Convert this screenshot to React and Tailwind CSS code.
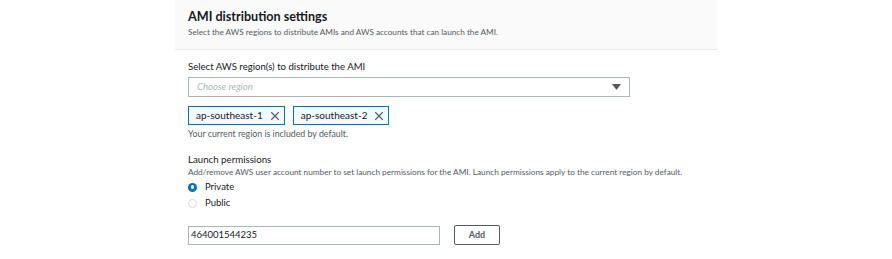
import React from 'react';

const font = { fontFamily: 'Lato, "Liberation Sans", sans-serif' };

const XIcon = () => (
  <svg width="10" height="10" viewBox="0 0 12 12" fill="none" stroke="#545b64" strokeWidth="1.4">
    <path d="M1.5 1.5l9 9M10.5 1.5l-9 9" />
  </svg>
);

const Token = ({ label }) => (
  <div className="flex items-center h-[19px] pl-[7px] pr-[4px] gap-[7px] border border-[#0073bb] bg-[#f1faff] text-[10px] text-[#16191f]">
    <span>{label}</span>
    <XIcon />
  </div>
);

const Radio = ({ checked, label }) => (
  <label className="flex items-center gap-[8px] h-[16px] text-[9.5px] text-[#16191f]">
    {checked ? (
      <span className="w-[9px] h-[9px] rounded-full bg-[#0073bb] flex items-center justify-center">
        <span className="w-[3.5px] h-[3.5px] rounded-full bg-white" />
      </span>
    ) : (
      <span className="w-[9px] h-[9px] rounded-full border border-[#d5dbdb] bg-white" />
    )}
    {label}
  </label>
);

export default function App() {
  return (
    <div className="w-[892px] h-[259px] bg-white" style={font}>
      <div className="mx-auto w-[542px]">
        {/* Header */}
        <div className="h-[50px] bg-[#fafafa] border-b border-[#eaeded] pl-[13px] pt-[8px]">
          <h2 className="text-[12.6px] leading-[18px] font-bold text-[#16191f]">AMI distribution settings</h2>
          <p className="text-[8.2px] leading-[13px] text-[#545b64]">
            Select the AWS regions to distribute AMIs and AWS accounts that can launch the AMI.
          </p>
        </div>

        <div className="pl-[13px] pt-[10px]">
          {/* Regions */}
          <div className="text-[9.6px] leading-[14px] text-[#16191f]">Select AWS region(s) to distribute the AMI</div>
          <div className="mt-[3px] w-[442px] h-[20px] border border-[#aab7b8] flex items-center justify-between pl-[8px] pr-[8px]">
            <span className="text-[9.5px] italic text-[#aab7b8]">Choose region</span>
            <svg width="9" height="6" viewBox="0 0 9 6">
              <path d="M0 0h9L4.5 6z" fill="#545b64" />
            </svg>
          </div>
          <div className="mt-[9px] flex gap-[8px]">
            <Token label="ap-southeast-1" />
            <Token label="ap-southeast-2" />
          </div>
          <div className="mt-[3px] text-[8.8px] leading-[12px] text-[#545b64]">Your current region is included by default.</div>

          {/* Launch permissions */}
          <div className="mt-[12px] text-[9.7px] leading-[14px] text-[#16191f]">Launch permissions</div>
          <div className="text-[8.25px] leading-[12px] text-[#545b64] whitespace-nowrap">
            Add/remove AWS user account number to set launch permissions for the AMI. Launch permissions apply to the current region by default.
          </div>
          <div className="mt-[1px] flex flex-col">
            <Radio checked label="Private" />
            <Radio label="Public" />
          </div>

          <div className="mt-[14px] flex items-center gap-[14px]">
            <div className="w-[252px] h-[19px] border border-[#aab7b8] flex items-center pl-[2px] text-[9.5px] text-[#16191f]">
              464001544235
            </div>
            <button className="w-[46px] h-[20px] border border-[#545b64] rounded-[2px] bg-white text-[9px] font-bold text-[#545b64]">
              Add
            </button>
          </div>
        </div>
      </div>
    </div>
  );
}
